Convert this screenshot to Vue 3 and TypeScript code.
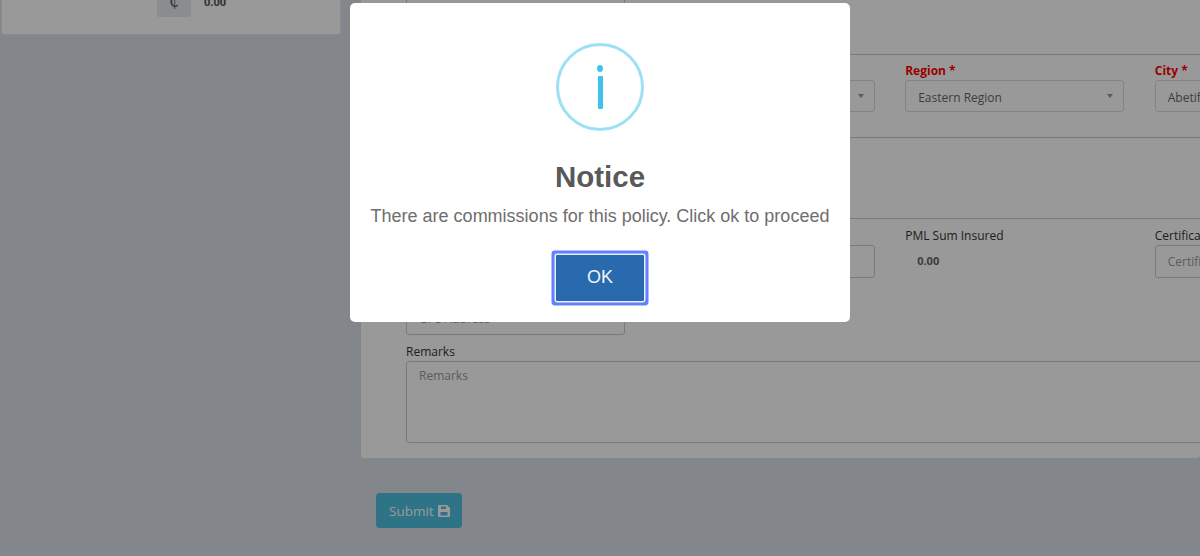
<template>
  <div class="page">
    <aside class="side">
      <div class="side-card">
        <span class="currency">₵</span>
        <span class="side-amount">0.00</span>
      </div>
    </aside>

    <main class="content">
      <form class="form-card" @submit.prevent>
        <div class="grid top-row">
          <input class="field tall" type="text" />
        </div>

        <section class="section location">
          <div class="grid">
            <div></div>
            <div class="group">
              <label class="label">&nbsp;</label>
              <div class="field select"><i class="caret"></i></div>
            </div>
            <div class="group">
              <label class="label required">Region *</label>
              <div class="field select">Eastern Region<i class="caret"></i></div>
            </div>
            <div class="group">
              <label class="label required">City *</label>
              <div class="field select">Abetifi<i class="caret"></i></div>
            </div>
          </div>
        </section>

        <section class="section spacer"></section>

        <section class="section risk">
          <div class="grid">
            <div></div>
            <div class="group">
              <label class="label">&nbsp;</label>
              <input class="field" type="text" />
            </div>
            <div class="group">
              <label class="label">PML Sum Insured</label>
              <div class="static-value">0.00</div>
            </div>
            <div class="group">
              <label class="label">Certificate No</label>
              <input class="field" type="text" placeholder="Certificate No" />
            </div>
          </div>
          <div class="grid gps-row">
            <input class="field" type="text" placeholder="GPS Address" />
          </div>
        </section>

        <div class="remarks">
          <label class="label">Remarks</label>
          <textarea class="field area" placeholder="Remarks"></textarea>
        </div>
      </form>

      <button class="submit" type="button">
        Submit
        <svg class="save" viewBox="0 0 12 14" width="12" height="14" aria-hidden="true">
          <path
            fill="currentColor"
            fill-rule="evenodd"
            d="M1 1h8l3 3v8a1 1 0 0 1-1 1H1a1 1 0 0 1-1-1V2a1 1 0 0 1 1-1zM3 2.500v2.500h5V2.500zM2.500 8v3.500h7V8z"
          />
        </svg>
      </button>
    </main>

    <div class="overlay">
      <div class="modal" role="dialog">
        <div class="info-icon">
          <span class="info-dot"></span>
          <span class="info-bar"></span>
        </div>
        <h2 class="modal-title">Notice</h2>
        <p class="modal-text">There are commissions for this policy. Click ok to proceed</p>
        <button class="ok" type="button">OK</button>
      </div>
    </div>
  </div>
</template>

<script setup lang="ts">
// static screen, nothing to wire up
</script>

<style>
html,
body {
  margin: 0;
  overflow: hidden;
}
</style>

<style scoped>
.page {
  position: relative;
  display: flex;
  width: 1200px;
  height: 556px;
  overflow: hidden;
  background: #dadfe6;
  font-family: "Open Sans", "Liberation Sans", sans-serif;
  font-size: 12px;
  color: #333;
}

.side {
  flex: 0 0 361px;
  padding-left: 1px;
  box-sizing: border-box;
}

.side-card {
  display: flex;
  align-items: flex-end;
  width: 340px;
  height: 35px;
  box-sizing: border-box;
  padding: 0 0 17px 155px;
  background: #fff;
  border: 1px solid #e6e9ec;
  border-top: 0;
  border-radius: 0 0 3px 3px;
}

.currency {
  width: 34px;
  height: 30px;
  margin-top: -12px;
  background: #e6ebef;
  border-radius: 0 0 2px 2px;
  text-align: center;
  font-family: "DejaVu Sans", sans-serif;
  font-size: 15px;
  line-height: 30px;
  color: #555;
}

.side-amount {
  margin-left: 13px;
  margin-bottom: 11px;
  font-weight: 700;
  font-size: 11px;
  line-height: 8px;
  color: #555;
}

.content {
  flex: 1;
  min-width: 0;
}

.form-card {
  height: 488px;
  margin-top: -30px;
  box-sizing: border-box;
  padding-left: 45px;
  background: #fff;
  border-radius: 3px;
  overflow: hidden;
}

.grid {
  display: grid;
  grid-template-columns: repeat(4, 219px);
  column-gap: 30.6px;
}

.section {
  border-top: 1px solid #ccc;
}

.location {
  margin-top: 44px;
  height: 83px;
  padding-top: 8px;
  box-sizing: border-box;
}

.spacer {
  height: 81px;
  box-sizing: border-box;
}

.risk {
  height: 117px;
  padding-top: 9px;
  box-sizing: border-box;
}

.gps-row {
  margin-top: 24px;
}

.group {
  display: flex;
  flex-direction: column;
}

.label {
  display: block;
  height: 17px;
  line-height: 16px;
  font-size: 12px;
  color: #333;
}

.required {
  font-weight: 700;
  color: #f00;
}

.field {
  display: block;
  position: relative;
  width: 100%;
  height: 33px;
  box-sizing: border-box;
  padding: 0 12px;
  background: #fff;
  border: 1px solid #ccc;
  border-radius: 3px;
  font: inherit;
  color: #555;
  line-height: 31px;
  outline: none;
}

.field::placeholder {
  color: #999;
  opacity: 1;
}

.tall {
  height: 40px;
}

.select {
  height: 32px;
  line-height: 33px;
  border-color: #ddd;
  color: #666;
}

.caret {
  position: absolute;
  top: 13px;
  right: 10px;
  border-left: 3.5px solid transparent;
  border-right: 3.5px solid transparent;
  border-top: 4.5px solid #999;
}

.static-value {
  padding: 8px 12px;
  font-weight: 700;
  font-size: 11px;
  line-height: 16px;
  color: #666;
}

.remarks {
  margin-top: 9px;
}

.area {
  width: 1000px;
  height: 82px;
  padding-top: 4px;
  line-height: 20px;
  resize: none;
}

.submit {
  display: flex;
  align-items: center;
  gap: 4px;
  height: 35px;
  margin: 35px 0 0 15px;
  padding: 0 11px 0 12px;
  background: #4ec0df;
  border: 1px solid #4ec0df;
  border-radius: 3px;
  font: inherit;
  font-size: 13.5px;
  color: #fff;
}

.overlay {
  position: absolute;
  inset: 0;
  display: flex;
  justify-content: center;
  align-items: flex-start;
  padding-top: 3px;
  background: rgba(0, 0, 0, 0.4);
}

.modal {
  display: flex;
  flex-direction: column;
  align-items: center;
  width: 500px;
  height: 319px;
  box-sizing: border-box;
  padding-top: 40px;
  background: #fff;
  border-radius: 5px;
  font-family: "Liberation Sans", Arial, sans-serif;
}

.info-icon {
  position: relative;
  width: 88px;
  height: 88px;
  box-sizing: border-box;
  border: 3px solid #9de0f6;
  border-radius: 50%;
}

.info-dot {
  position: absolute;
  top: 19px;
  left: 38px;
  width: 6px;
  height: 7px;
  background: #3fc3ee;
  border-radius: 50%;
}

.info-bar {
  position: absolute;
  top: 30px;
  left: 38.5px;
  width: 5px;
  height: 33px;
  background: #3fc3ee;
  border-radius: 1px;
}

.modal-title {
  margin: 28px 0 0;
  font-size: 29.500px;
  font-weight: 700;
  line-height: 36px;
  color: #595959;
}

.modal-text {
  margin: 9px 0 0;
  font-size: 18px;
  line-height: 24px;
  color: #6e6e6e;
}

.ok {
  width: 88px;
  height: 46px;
  margin-top: 27px;
  padding: 0 0 2px;
  background: #286aad;
  border: 0;
  border-radius: 1px;
  box-shadow: 0 0 0 1.5px #e8eef8, 0 0 0 4.5px #6480ff;
  font: inherit;
  font-size: 18px;
  color: #f0f4fa;
}
</style>
